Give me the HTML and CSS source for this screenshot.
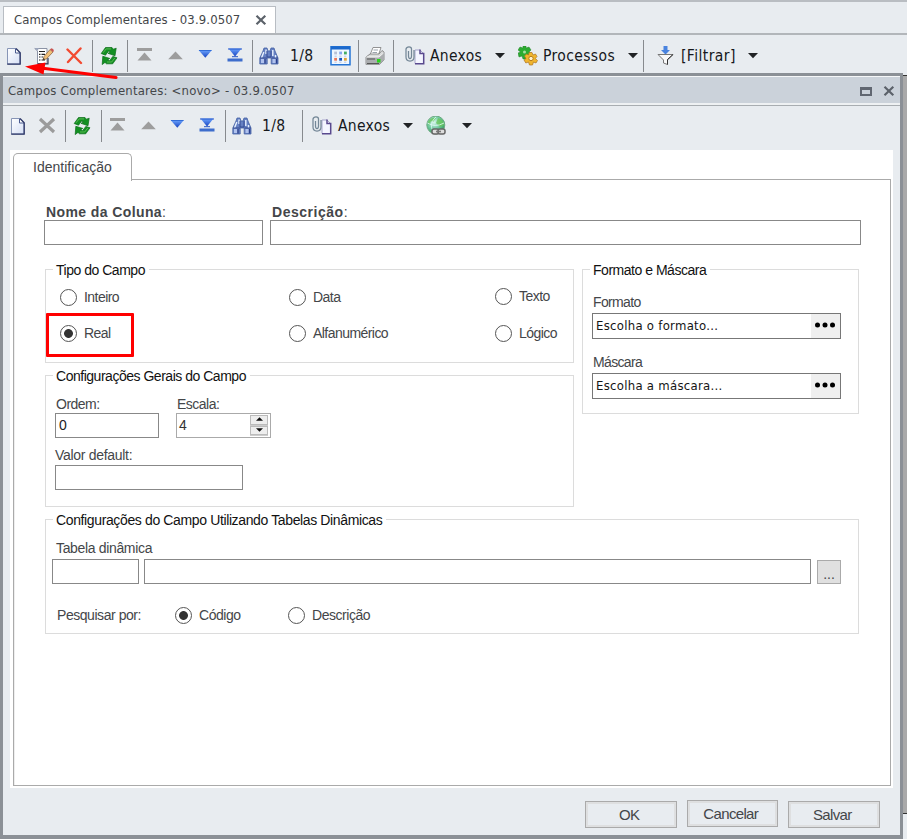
FILE: index.html
```html
<!DOCTYPE html>
<html lang="pt-BR">
<head>
<meta charset="utf-8">
<title>Campos Complementares</title>
<link rel="stylesheet" href="styles.css">
</head>
<body>
<svg class="defs" width="0" height="0" aria-hidden="true">
  <defs>
    <linearGradient id="blue" x1="0" y1="0" x2="0" y2="1"><stop offset="0" stop-color="#6ea6ff"/><stop offset="1" stop-color="#1643c0"/></linearGradient>
    <linearGradient id="paper" x1="0" y1="0" x2="1" y2="1"><stop offset="0" stop-color="#ffffff"/><stop offset="1" stop-color="#d5dff5"/></linearGradient>
    <radialGradient id="globe" cx=".4" cy=".35" r=".7"><stop offset="0" stop-color="#d9f7ee"/><stop offset=".55" stop-color="#6cc69c"/><stop offset="1" stop-color="#2f9650"/></radialGradient>
  </defs>
  <symbol id="new" viewBox="0 0 20 20">
    <path d="M1.5 2.5H9.5L14 7V18H1.5Z" fill="url(#paper)" stroke="#8795b6"/>
    <path d="M9.5 2.5V7H14" fill="#fff" stroke="#4b5c91"/>
    <path d="M10 2.5L14.2 6.7V18.2H1.2" fill="none" stroke="#2d3768" stroke-width="1.3"/>
  </symbol>
  <symbol id="edit" viewBox="0 0 20 20">
    <path d="M.8 2.5H13V17.5H3.5V5Z" fill="#fff" stroke="#8b93a5"/>
    <path d="M.5 2H5L3.5 5Z" fill="#9ba5bb"/>
    <path d="M3.5 17.8H14V12" fill="none" stroke="#343a55" stroke-width="1.2"/>
    <path d="M5 5.5H11M5 8.3H6.5M7.5 8.3H11M5 11H6.5M7.5 11H9M5 14H6.5M7.5 14H11" stroke="#222" stroke-width="1.2"/>
    <path d="M9 14L10 10.5L16 3.5L19 6L12.5 12.8Z" fill="#f0bf78" stroke="#906b45" stroke-width=".8"/>
    <path d="M16 3.5L17.2 2.3Q20.2 2.8 19.8 5.2L19 6Z" fill="#c85552"/><path d="M9 14L9.6 12L11 13.3Z" fill="#222"/>
  </symbol>
  <symbol id="delete" viewBox="0 0 20 20"><path d="M1.5 3.5L15 17M14.5 2.5L2 16" fill="none" stroke="#f24a31" stroke-width="2.4" stroke-linecap="round"/></symbol>
  <symbol id="cross" viewBox="0 0 20 20"><path d="M2 3L16 16M16 3L2 16" fill="none" stroke="#9b9b9b" stroke-width="3.2"/></symbol>
  <symbol id="refresh" viewBox="0 0 20 20">
    <path d="M1.2 7.5L5.5 1.5H12L13.3 3.2L16.2 2.2L15 9.8L8 7.3L10.4 5.9L8.6 5L5.5 9.2Z" fill="#129022" stroke="#0a6c17" stroke-width=".7"/>
    <path d="M17 11.8L12.7 17.8H6.5L5 16.4L2.2 18.6L2.8 10.3L9.8 12.4L7.7 13.8L9.7 14.7L12.8 10.4Z" fill="#129022" stroke="#0a6c17" stroke-width=".7"/>
    <path d="M3 6.8L6.2 2.9H11M7 16H11.7L14.8 12" fill="none" stroke="#64bd59" stroke-width=".9"/>
  </symbol>
  <symbol id="first" viewBox="0 0 20 20"><path d="M1 2H16V5H1ZM8.5 6.5L15.5 14.5H1.5Z" fill="#9d9d9d"/></symbol>
  <symbol id="prev" viewBox="0 0 20 20"><path d="M7.5 5.5L14.8 13.2H.2Z" fill="#9d9d9d"/></symbol>
  <symbol id="next" viewBox="0 0 20 20"><path d="M.5 4H14L7.3 11.7Z" fill="url(#blue)"/><path d="M1 4.5H13.5" stroke="#316cd7"/></symbol>
  <symbol id="last" viewBox="0 0 20 20"><path d="M1.5 2.5H14.5L8 10.5Z" fill="url(#blue)"/><path d="M1 3H15M5 10.7H11" stroke="#2455c8"/><path d="M.5 12.5H15.5V15.5H.5Z" fill="#3d6dcc"/></symbol>
  <symbol id="find" viewBox="0 0 20 20">
    <path d="M4 5L5 2H8L9 5H11L12 2H15L16 5L19 12V18H12.2V12H8.2V18H.8V12Z" fill="#6681c3" stroke="#4562a5" stroke-width=".8"/>
    <path d="M4.8 6L2.5 12M7 3.5V8M13.8 4V10M16.5 9V12" stroke="#e8f2ff" stroke-width="1.4"/>
    <path d="M2 13H6.6V17H2ZM13.5 13H18V17H13.5Z" fill="#b0c2ee"/><path d="M1 12H8M12.5 12H19M8 5V11H12V5" fill="none" stroke="#344b91"/><path d="M6 13V17.5M17.5 13V17.5" stroke="#293f8b" stroke-width="1.5"/>
  </symbol>
  <symbol id="calendar" viewBox="0 0 21 20">
    <path d="M1 .5H20V18.8H1Z" fill="#eff7ff" stroke="#2374d5" stroke-width="1.5"/><path d="M1 .5H20V3.5H1Z" fill="#1c69cc"/>
    <g stroke-width="2.8"><path d="M4.2 7H7" stroke="#b8c1d5"/><path d="M9.2 7H12" stroke="#86a7ed"/><path d="M14 7H16.8" stroke="#43ad63"/><path d="M4.2 13.3H7" stroke="#ec785b"/><path d="M9.2 13.3H12" stroke="#1655bd"/><path d="M14 13.3H16.8" stroke="#dda43b"/></g>
    <path d="M4.5 10.2H16.5M4.5 16.2H16.5" stroke="#b9c2df" stroke-dasharray="2.2 2.6"/>
  </symbol>
  <symbol id="print" viewBox="0 0 20 20">
    <path d="M5 9L8 1.5H16L13.5 9Z" fill="#fff" stroke="#888" stroke-width=".9"/><path d="M8.5 4H13M7.5 6.5H12" stroke="#9ca5ae"/>
    <path d="M1 11L5 8H14L17 4.5L19 6V14L14.5 18.5H1Z" fill="#d9dbdb" stroke="#777" stroke-width=".8"/>
    <path d="M1 11H14L19 6V14L14.5 18.5H1Z" fill="#aaadaf"/><path d="M1.5 11H14L18.5 7" fill="none" stroke="#f5f5f5"/><path d="M2 13H10M2 17.5H14" stroke="#555"/><path d="M12 13H15.5V16.5H12Z" fill="#28d51b"/>
  </symbol>
  <symbol id="clip" viewBox="0 0 20 20">
    <path d="M10 4H15L18.5 7.5V17.5H10Z" fill="#f4f5ff" stroke="#a6a5cc"/><path d="M15 3.5V7.5H18.7V17.7H10" fill="none" stroke="#59498e" stroke-width="1.5"/>
    <path d="M3.5 5V10Q3.5 12.5 5 12.5T6.5 10V3Q6.5 .8 4 .8T1 3V11Q1 15 5 15T9 11V4" fill="none" stroke="#748797" stroke-width="1.25"/>
  </symbol>
  <symbol id="gears" viewBox="0 0 20 20">
    <path d="M5 0H8V2L11 1L13 4L11 6L13.5 8L11.5 11L9 10L8 13H5L4 10L1 11L0 7L2.5 6L0 4L2 1L5 2Z" fill="#2bac31" stroke="#248328" stroke-width=".5"/><circle cx="6.5" cy="6" r="1.5" fill="#a5dfa0"/>
    <path d="M11 6.5H14L15 9L17.5 8L19 10.5L17.3 12.5L19.5 14.5L18 17L15.5 16L14.5 19H11.5L10.5 16L7.8 17L6 14L8 12.5L6.5 10L8.5 8L10.5 9Z" fill="#f0b52d" stroke="#ae741f" stroke-width=".7"/><circle cx="13" cy="12.5" r="2.2" fill="#fff1c9" stroke="#b87b18"/>
  </symbol>
  <symbol id="filter" viewBox="0 0 20 20"><path d="M6.5 0H10.5V4H13L8.5 8.5L4 4H6.5Z" fill="#4983df"/><path d="M1 8.5H16L10.5 14V18.5L6.5 17V14Z" fill="#f9f9f9" stroke="#777"/><path d="M10.5 13.5V18.5M10.5 13.5L16 8.5" fill="none" stroke="#333"/></symbol>
  <symbol id="web" viewBox="0 0 21 20"><circle cx="9.8" cy="9" r="9" fill="url(#globe)" stroke="#6eaa83"/><path d="M2 6Q5 1 10 2L7 6L5 5L3 10ZM12 2Q18 4 18 9L14 11L10 7Z" fill="#68c65b" opacity=".8"/><path d="M10 1C4 6 4 13 9 17M1.5 7Q9 12 18 7" fill="none" stroke="#dffaf6" stroke-width=".8"/><rect x="6" y="13" width="7" height="5" rx="2" fill="#ddd" stroke="#666" stroke-width="1.5"/><rect x="12" y="13" width="7" height="5" rx="2" fill="#ddd" stroke="#666" stroke-width="1.5"/><path d="M10 15.5H15" stroke="#777" stroke-width="1.6"/></symbol>
  <symbol id="caret" viewBox="0 0 20 20"><path d="M0 7H10L5 12.2Z" fill="#202225"/></symbol>
  <symbol id="close" viewBox="0 0 12 12"><path d="M1.5 1.8L10.3 10.2M10.3 1.8L1.5 10.2" stroke="#5c626a" stroke-width="2.2"/></symbol>
</svg>

<div class="app">
  <header class="tabs"><div class="doc-tab"><span class="doc-title">Campos Complementares - 03.9.0507</span><svg class="close"><use href="#close"/></svg></div></header>
  <nav class="toolbar main-tools">
    <svg><use href="#new"/></svg><svg><use href="#edit"/></svg><svg><use href="#delete"/></svg><i class="sep"></i>
    <svg><use href="#refresh"/></svg><i class="sep"></i><svg><use href="#first"/></svg><svg><use href="#prev"/></svg><svg><use href="#next"/></svg><svg><use href="#last"/></svg><i class="sep"></i>
    <svg><use href="#find"/></svg><span>1/8</span><svg class="wide"><use href="#calendar"/></svg><i class="sep"></i><svg><use href="#print"/></svg><i class="sep"></i>
    <svg><use href="#clip"/></svg><span>Anexos</span><svg><use href="#caret"/></svg><svg><use href="#gears"/></svg><span class="proc">Processos</span><svg><use href="#caret"/></svg><i class="sep"></i>
    <svg><use href="#filter"/></svg><span class="filtrar">[Filtrar]</span><svg><use href="#caret"/></svg>
  </nav>
  <div class="workspace">
    <section class="dialog">
      <div class="titlebar"><span class="dialog-title">Campos Complementares: &lt;novo&gt; - 03.9.0507</span><i class="maximize"></i><svg class="close"><use href="#close"/></svg></div>
      <nav class="toolbar dialog-tools">
        <svg><use href="#new"/></svg><svg><use href="#cross"/></svg><i class="sep"></i><svg><use href="#refresh"/></svg><i class="sep"></i>
        <svg><use href="#first"/></svg><svg><use href="#prev"/></svg><svg><use href="#next"/></svg><svg><use href="#last"/></svg><i class="sep"></i><svg><use href="#find"/></svg><span>1/8</span><i class="sep"></i>
        <svg><use href="#clip"/></svg><span>Anexos</span><svg><use href="#caret"/></svg><svg class="wide"><use href="#web"/></svg><svg><use href="#caret"/></svg>
      </nav>
      <div class="page">
        <div class="page-tabs"><div class="page-tab"><span>Identificação</span></div><div class="tab-line"></div></div>
        <main class="panel">
          <div class="identity">
            <div><b class="name-label">Nome da Coluna<span>:</span></b><div class="input"></div></div>
            <div><b class="desc-label">Descrição<span>:</span></b><div class="input"></div></div>
          </div>
          <div class="columns">
            <div class="left-column">
              <section class="group type-group"><h2 class="t-type">Tipo do Campo</h2>
                <div class="radios">
                  <div class="radio"><i></i><span>Inteiro</span></div><div class="radio"><i></i><span>Data</span></div><div class="radio raised"><i></i><span>Texto</span></div>
                  <div class="radio"><i class="checked"></i><span>Real</span><em class="highlight"></em></div><div class="radio"><i></i><span class="t-alfa">Alfanumérico</span></div><div class="radio"><i></i><span>Lógico</span></div>
                </div>
              </section>
              <section class="group general-group"><h2 class="t-general">Configurações Gerais do Campo</h2>
                <div class="general-fields">
                  <div><label>Ordem:</label><div class="input order">0</div></div>
                  <div><label>Escala:</label><div class="spinner"><span>4</span><div class="spin-buttons"><i><svg viewBox="0 0 8 5"><path d="M4 0L8 4H0Z"/></svg></i><i><svg viewBox="0 0 8 5"><path d="M0 0H8L4 4Z"/></svg></i></div></div></div>
                </div>
                <div class="default-field"><label class="t-default">Valor default:</label><div class="input"></div></div>
              </section>
            </div>
            <section class="group format-group"><h2 class="t-format">Formato e Máscara</h2>
              <label>Formato</label><div class="picker"><span>Escolha o formato...</span><i><svg viewBox="0 0 21 6"><circle cx="2.5" cy="3" r="2.5"/><circle cx="10" cy="3" r="2.5"/><circle cx="17.5" cy="3" r="2.5"/></svg></i></div>
              <label>Máscara</label><div class="picker"><span>Escolha a máscara...</span><i><svg viewBox="0 0 21 6"><circle cx="2.5" cy="3" r="2.5"/><circle cx="10" cy="3" r="2.5"/><circle cx="17.5" cy="3" r="2.5"/></svg></i></div>
            </section>
          </div>
          <section class="group table-group"><h2 class="t-table">Configurações do Campo Utilizando Tabelas Dinâmicas</h2>
            <label class="t-dynamic">Tabela dinâmica</label>
            <div class="lookup"><div class="input"></div><div class="input"></div><div class="browse">...</div></div>
            <div class="search"><span class="t-search">Pesquisar por:</span><div class="radio"><i class="checked"></i><span>Código</span></div><div class="radio"><i></i><span>Descrição</span></div></div>
          </section>
        </main>
      </div>
      <footer><div class="button">OK</div><div class="button cancel">Cancelar</div><div class="button">Salvar</div></footer>
    </section>
    <aside></aside>
  </div>
  <svg class="arrow" viewBox="0 0 100 26"><path d="M15 7L90 16.5" stroke="#f00" stroke-width="3.2" stroke-linecap="round"/><path d="M-1 5.5L19.5 1.5L17.5 13.5Z" fill="#f00"/></svg>
</div>
</body>
</html>
```
FILE: styles.css
```css
* { box-sizing: border-box; }
body { margin: 0; width: 907px; height: 839px; overflow: hidden; background: #e8ecf0; color: #444649; font: 14px/16px "Liberation Sans", sans-serif; letter-spacing: -.55px; }
svg { display: block; }
.defs { position: absolute; }
.app { position: relative; height: 839px; }
.tabs { height: 35px; padding: 5px 0 0 3px; border-top: 2px solid #b9bdc2; border-bottom: 2px solid #b2b6ba; }
.doc-tab { display: flex; align-items: center; justify-content: space-between; width: 273px; height: 27px; margin-top: -1px; padding: 0 8px 0 10px; background: #fff; border: 1px solid #b8bdc3; border-bottom: 0; }
.doc-title, .dialog-title { font: 13px/16px "DejaVu Sans Condensed", "DejaVu Sans", sans-serif; white-space: nowrap; letter-spacing: .12px; }
.dialog-title { letter-spacing: .2px; }
.close { width: 12px; height: 12px; }
.toolbar { display: grid; align-items: center; color: #16181c; font: 15.5px/20px "DejaVu Sans Condensed", sans-serif; letter-spacing: .3px; white-space: nowrap; }
.main-tools span { margin-top: 1px; }
.toolbar svg { width: 20px; height: 20px; overflow: visible; }
.toolbar .wide { width: 21px; }
.sep { width: 1px; height: 32px; background: #878a8e; }
.main-tools .proc { letter-spacing: .38px; }
.main-tools .filtrar { letter-spacing: .42px; }
.main-tools { height: 38px; padding: 3px 0 0 6px; grid-template-columns: 28px 32px 26px 8px 27px 9px 32px 30px 29px 25px 7px 31px 40px 28px 7px 28px 12px 25px 65px 23px 25px 85px 15px 14px 24px 67px 20px; }
.dialog-tools { height: 42px; padding: 0 0 2px 7px; grid-template-columns: 28px 27px 8px 28px 8px 32px 29px 29px 26px 7px 30px 40px 10px 26px 65px 23px 36px 20px; }
.workspace { display: flex; height: 766px; }
.dialog { width: 903px; height: 766px; border: 3px solid #8b9096; border-bottom-width: 4px; }
.titlebar { display: flex; align-items: center; height: 30px; padding: 0 6px 0 5px; background: #cbd2da; border-top: 1px solid #f5f7f8; border-bottom: 1px solid #a8adb1; box-shadow: inset 0 -2px #eef1f3; }
.titlebar .close { margin-right: -1px; }
.maximize { width: 12px; height: 9px; margin-left: auto; margin-right: 11px; border: solid #616771; border-width: 3px 2px 2px; }
.page { width: 883px; height: 638px; margin: 2px 0 0 7px; padding: 3px 2px 0 3px; background: #fff; }
.page-tabs { display: flex; height: 27px; }
.page-tab { width: 119px; height: 28px; padding: 5px 0 0 19px; border: 1px solid #aaa; border-bottom: 0; border-radius: 5px 5px 0 0; letter-spacing: .02px; }
.tab-line { flex: 1; border-bottom: 1px solid #aaa; }
.panel { height: 606px; padding: 25px 0 0 30px; border: 1px solid #aaa; border-top: 0; box-shadow: inset 1px 0 #eee; }
.identity { display: grid; grid-template-columns: 219px 591px; gap: 7px; height: 64px; }
.identity b { display: block; height: 15px; line-height: 14px; padding-left: 2px; letter-spacing: .4px; }
.identity b span { font-weight: normal; }
.identity .desc-label { letter-spacing: .52px; }
.input { height: 25px; background: #fff; border: 1px solid #888; }
.columns { display: flex; gap: 8px; height: 250px; padding-left: 1px; }
.left-column { width: 529px; }
.group { border: 1px solid #dcdcdc; }
.group h2 { width: max-content; height: 16px; margin: -8px 0 0 7px; padding: 0 4px 0 3px; background: #fff; color: #111; font-weight: normal; font-size: 14px; line-height: 16px; white-space: nowrap; }
.group .t-type, .group .t-general, .group .t-format { letter-spacing: -.48px; }
.group .t-table { letter-spacing: -.37px; }
.type-group { height: 94px; }
.radios { display: grid; grid-template-columns: 229px 206px 1fr; grid-template-rows: 36px 38px; padding: 1px 0 0 14px; }
.radio { position: relative; display: flex; align-items: center; gap: 7px; height: 36px; white-space: nowrap; }
.radio i { width: 17px; height: 17px; border: 1.5px solid #555; border-radius: 50%; background: #fff; }
.radio .checked { background: radial-gradient(circle, #333 0 4px, #fff 4.8px); }
.raised { top: -1px; }
.highlight { position: absolute; left: -14px; top: -2px; width: 88px; height: 44px; border: 3px solid #f00; border-radius: 1px; }
.general-group { height: 132px; margin-top: 12px; }
label { display: block; height: 16px; line-height: 15px; white-space: nowrap; }
.general-fields { display: flex; gap: 17px; padding: 13px 0 0 9px; }
.general-fields label { padding-left: 1px; letter-spacing: -.5px; }
.order { width: 104px; padding: 3px; color: #222; }
.spinner { display: flex; width: 95px; height: 25px; padding: 1px 2px 1px 2px; border: 1px solid #aaa; color: #333; }
.spinner > span { flex: 1; line-height: 20px; }
.spin-buttons { width: 18px; display: grid; gap: 1px; background: #ccc; padding: 0 0 1px; }
.spin-buttons i { display: grid; place-items: center; background: #eee; border: 1px solid #bbb; }
.spin-buttons svg { width: 7px; height: 5px; fill: #111; }
.default-field { padding: 10px 0 0 9px; }
.t-default { letter-spacing: -.3px; }
.default-field .input { width: 188px; margin-top: 1px; }
.format-group { width: 277px; height: 145px; padding: 0 17px 0 9px; }
.format-group h2 { margin-left: -2px; margin-bottom: 17px; }
.format-group > label { height: 18px; padding-left: 1px; letter-spacing: -.65px; line-height: 14px; }
.picker { display: flex; height: 26px; margin-bottom: 16px; border: 1px solid #777; color: #151515; }
.picker > span { flex: 1; padding: 3px 3px; font: 13px/17px "DejaVu Sans Condensed", sans-serif; letter-spacing: .28px; }
.picker i { width: 29px; padding: 8px 4px; background: #efefef; }
.picker svg { width: 21px; height: 6px; }
.table-group { width: 814px; height: 115px; margin-left: 1px; }
.table-group > label { margin: 13px 0 2px 10px; letter-spacing: -.34px; line-height: 14px; }
.lookup { display: grid; grid-template-columns: 87px 667px 24px; column-gap: 5px; padding-left: 6px; }
.browse { width: 24px; height: 24px; margin: 1px 0 0 1px; border: 1px solid #aaa; background: #e0e0e0; text-align: center; line-height: 26px; letter-spacing: 0; }
.search { display: grid; grid-template-columns: 118px 113px 120px; align-items: center; height: 36px; padding-left: 11px; margin-top: 13px; letter-spacing: -.45px; }
footer { display: flex; gap: 10px; padding: 13px 0 0 582px; font: 15px/25px "Liberation Sans", sans-serif; letter-spacing: -.65px; }
.button { width: 91.5px; height: 27px; border: 1px solid #aaa; box-shadow: inset 0 0 0 2px #dedfe0; text-align: center; padding-right: 3px; }
.cancel { margin-top: -1px; }
aside { width: 4px; height: 739px; margin-top: 2px; border-top: 1px solid #333; border-bottom: 1px solid #333; background: #a9a9a9; }
.arrow { position: absolute; left: 26px; top: 61px; width: 100px; height: 26px; z-index: 2; overflow: visible; }
```
